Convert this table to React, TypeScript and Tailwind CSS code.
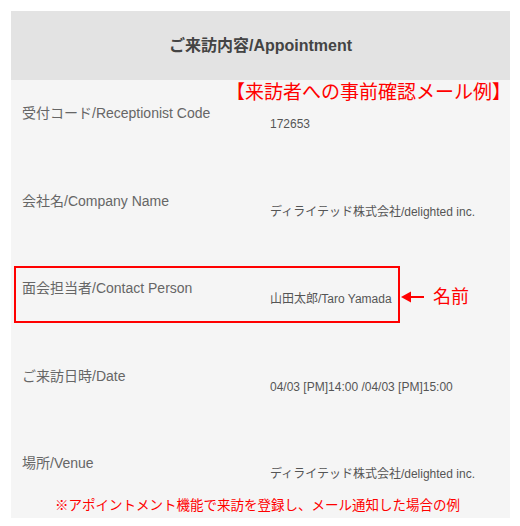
import { Fragment } from "react";

// ─── Data ─────────────────────────────────────────────────────────────────────

const rows = [
  { label: "受付コード/Receptionist Code", value: "172653" },
  { label: "会社名/Company Name", value: "ディライテッド株式会社/delighted inc." },
  { label: "面会担当者/Contact Person", value: "山田太郎/Taro Yamada" },
  { label: "ご来訪日時/Date", value: "04/03 [PM]14:00 /04/03 [PM]15:00" },
  { label: "場所/Venue", value: "ディライテッド株式会社/delighted inc." },
];

const font = "font-['Liberation_Sans','Noto_Sans_CJK_JP',sans-serif]";

// ─── Arrow ────────────────────────────────────────────────────────────────────

function LeftArrow() {
  return (
    <svg width="24" height="12" viewBox="0 0 24 12" className="block">
      <path d="M0 6 L10 0.5 L10 11.5 Z" fill="#ff0000" />
      <rect x="9" y="5" width="14" height="2" fill="#ff0000" />
    </svg>
  );
}

// ─── App ──────────────────────────────────────────────────────────────────────

export default function App() {
  return (
    <div className={`relative h-[526px] w-[520px] overflow-hidden bg-white pt-[11px] ${font}`}>
      <div className="ml-[11px] w-[499px] bg-[#f5f5f5]">
        <div className="flex h-[69px] items-center justify-center bg-[#e3e3e3]">
          <h1 className="text-[16px] font-bold text-[#444]">ご来訪内容/Appointment</h1>
        </div>
        <div className="grid grid-cols-[248px_1fr] pl-[11px]">
          {rows.map((r) => (
            <Fragment key={r.label}>
              <div className="h-[87.5px] pt-[23px] text-[14px] leading-5 text-[#666]">{r.label}</div>
              <div className="pt-[36px] text-[12px] leading-4 text-[#555]">{r.value}</div>
            </Fragment>
          ))}
        </div>
      </div>

      {/* annotations laid over the mail */}
      <div className="absolute left-[226px] top-[81px] text-[19px] leading-6 text-[#ff0000]">
        【来訪者への事前確認メール例】
      </div>
      <div className="absolute left-[14px] top-[266px] h-[57px] w-[386px] border-2 border-[#ff0000]" />
      <div className="absolute left-[401px] top-[285px] flex items-center gap-[8px]">
        <LeftArrow />
        <span className="text-[18px] leading-6 text-[#ff0000]">名前</span>
      </div>
      <div className="absolute left-[55px] top-[496px] text-[13.5px] leading-5 text-[#ff0000]">
        ※アポイントメント機能で来訪を登録し、メール通知した場合の例
      </div>
    </div>
  );
}
